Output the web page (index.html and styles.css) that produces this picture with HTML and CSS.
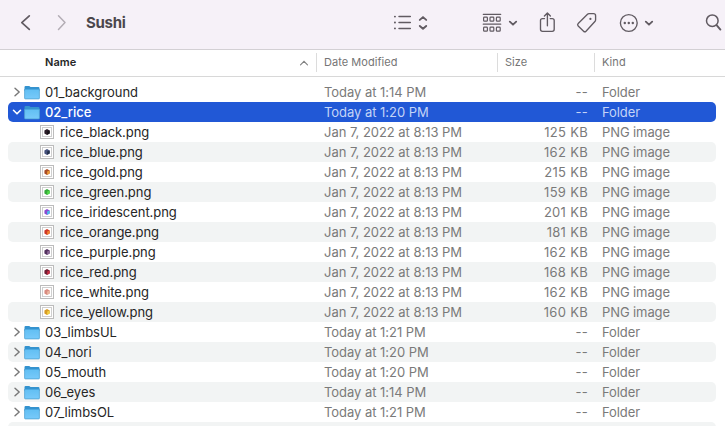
FILE: index.html
```html
<!DOCTYPE html>
<html lang="en">
<head>
<meta charset="utf-8">
<title>Sushi</title>
<link rel="stylesheet" href="styles.css">
</head>
<body>
<svg class="defs" width="0" height="0">
  <defs>
    <linearGradient id="face" x1="0" y1="0" x2="0" y2="1"><stop offset="0" stop-color="#62bff3"/><stop offset="1" stop-color="#78cafa"/></linearGradient>
    <symbol id="folder" viewBox="0 0 16 15">
      <path d="M.5 2.2Q.5 1 1.6 1H5.2L6.6 2.1H14.4Q15.5 2.1 15.5 3.2V6H.5Z" fill="#3493cf"/>
      <path d="M.5 4.6H15.5V13Q15.5 14 14.5 14H1.5Q.5 14 .5 13Z" fill="url(#face)"/>
      <path d="M.6 4V13.3Q.6 13.9 1.4 13.9H14.6Q15.4 13.9 15.4 13.3V4" fill="none" stroke="#4a9dce" stroke-width=".7"/>
    </symbol>
    <symbol id="closed" viewBox="0 0 10 10"><path d="M3 1.2L7.2 5L3 8.8" fill="none" stroke="currentColor" stroke-width="1.4" stroke-linecap="round" stroke-linejoin="round"/></symbol>
    <symbol id="open" viewBox="0 0 10 10"><path d="M1.5 3.3L5 6.8L8.5 3.3" fill="none" stroke="currentColor" stroke-width="1.6" stroke-linecap="round" stroke-linejoin="round"/></symbol>
    <symbol id="thumb" viewBox="0 0 14 14">
      <rect x=".5" y=".5" width="13" height="13" fill="#fff" stroke="#bcbcbc"/>
      <rect x="2.5" y="2.5" width="9" height="9" fill="#fff" stroke="#cfcfcf"/>
      <path d="M7 4.1L9.7 5.4V8.5L7 9.9L4.4 8.5V5.4Z" fill="currentColor"/>
      <path d="M7.1 6.6L9.7 5.4V8.5L7.1 9.8Z" fill="var(--side)"/>
    </symbol>
  </defs>
</svg>
<header class="toolbar">
  <svg viewBox="0 0 725 49" width="725" height="49" fill="none" stroke="#615b62" stroke-width="1.5" stroke-linecap="round" stroke-linejoin="round">
    <path d="M29.3 15.8L21.8 22.6L29.3 29.4" stroke-width="1.7"/>
    <path d="M58.5 15.8L65 22.6L58.5 29.4" stroke="#b3adb5"/>
    <path d="M399 16.6H410.3M399 22.5H410.3M399 28.4H410.3"/>
    <path d="M394.9 16.6H395M394.9 22.5H395M394.9 28.4H395" stroke-width="1.9"/>
    <path d="M419.8 19.9L423 17.1L426.2 19.9M419.8 26L423 28.8L426.2 26" stroke-width="1.9"/>
    <path d="M483.3 14.3H500.7M483.3 24.2H500.7" stroke-width="1.3"/>
    <g stroke-width="1.2"><rect x="483.6" y="17.2" width="3.8" height="4" rx=".8"/><rect x="490" y="17.2" width="3.8" height="4" rx=".8"/><rect x="496.4" y="17.2" width="3.8" height="4" rx=".8"/><rect x="483.6" y="27.2" width="3.8" height="4" rx=".8"/><rect x="490" y="27.2" width="3.8" height="4" rx=".8"/><rect x="496.4" y="27.2" width="3.8" height="4" rx=".8"/></g>
    <path d="M509.8 21.6L513 24.7L516.2 21.6M645.8 21.6L649 24.7L652.2 21.6" stroke-width="1.8"/>
    <path d="M544.5 18.6H542.5Q540.5 18.6 540.5 20.6V29.2Q540.5 31.3 542.5 31.3H552.2Q554.2 31.3 554.2 29.2V20.6Q554.2 18.6 552.2 18.6H550.2M547.4 25.8V13.3M544.4 16L547.4 13L550.4 16" stroke-width="1.35"/>
    <path d="M587.5 14.2Q588.1 13.6 589 13.6H593.5Q595.6 13.6 595.6 15.7V19.8Q595.6 20.8 594.9 21.5L586 31.2Q584.8 32.4 583.6 31.2L578.2 26.1Q577 24.8 578.2 23.6Z" stroke-width="1.35"/>
    <circle cx="590.4" cy="18.9" r="1.1" fill="#615b62" stroke="none"/>
    <circle cx="628.8" cy="23" r="8.4" stroke-width="1.35"/>
    <g fill="#615b62" stroke="none"><circle cx="624.8" cy="23" r="1.2"/><circle cx="628.8" cy="23" r="1.2"/><circle cx="632.8" cy="23" r="1.2"/></g>
    <circle cx="712.3" cy="20.7" r="5.8"/><path d="M716.6 25.2L720.4 29.6" stroke-width="1.9"/>
  </svg>
  <h1>Sushi</h1>
</header>
<div class="columns">
  <div class="c-name">Name<svg width="10" height="10" viewBox="0 0 10 10"><path d="M1.5 6.8L5 3.3L8.5 6.8" fill="none" stroke="#808080" stroke-width="1.1" stroke-linecap="round"/></svg></div>
  <div class="c-date">Date Modified</div><div class="c-size">Size</div><div>Kind</div>
</div>
<main class="list">
  <div class="row"><svg class="arrow"><use href="#closed"/></svg><svg class="folder"><use href="#folder"/></svg><span class="name">01_background</span><span class="date">Today at 1:14 PM</span><span class="size">--</span><span class="kind">Folder</span></div>
  <div class="row selected"><svg class="arrow"><use href="#open"/></svg><svg class="folder"><use href="#folder"/></svg><span class="name">02_rice</span><span class="date">Today at 1:20 PM</span><span class="size">--</span><span class="kind">Folder</span></div>
  <div class="row file"><svg class="thumb black"><use href="#thumb"/></svg><span class="name">rice_black.png</span><span class="date">Jan 7, 2022 at 8:13 PM</span><span class="size">125 KB</span><span class="kind">PNG image</span></div>
  <div class="row file"><svg class="thumb blue"><use href="#thumb"/></svg><span class="name">rice_blue.png</span><span class="date">Jan 7, 2022 at 8:13 PM</span><span class="size">162 KB</span><span class="kind">PNG image</span></div>
  <div class="row file"><svg class="thumb gold"><use href="#thumb"/></svg><span class="name">rice_gold.png</span><span class="date">Jan 7, 2022 at 8:13 PM</span><span class="size">215 KB</span><span class="kind">PNG image</span></div>
  <div class="row file"><svg class="thumb green"><use href="#thumb"/></svg><span class="name">rice_green.png</span><span class="date">Jan 7, 2022 at 8:13 PM</span><span class="size">159 KB</span><span class="kind">PNG image</span></div>
  <div class="row file"><svg class="thumb iridescent"><use href="#thumb"/></svg><span class="name">rice_iridescent.png</span><span class="date">Jan 7, 2022 at 8:13 PM</span><span class="size">201 KB</span><span class="kind">PNG image</span></div>
  <div class="row file"><svg class="thumb orange"><use href="#thumb"/></svg><span class="name">rice_orange.png</span><span class="date">Jan 7, 2022 at 8:13 PM</span><span class="size">181 KB</span><span class="kind">PNG image</span></div>
  <div class="row file"><svg class="thumb purple"><use href="#thumb"/></svg><span class="name">rice_purple.png</span><span class="date">Jan 7, 2022 at 8:13 PM</span><span class="size">162 KB</span><span class="kind">PNG image</span></div>
  <div class="row file"><svg class="thumb red"><use href="#thumb"/></svg><span class="name">rice_red.png</span><span class="date">Jan 7, 2022 at 8:13 PM</span><span class="size">168 KB</span><span class="kind">PNG image</span></div>
  <div class="row file"><svg class="thumb white"><use href="#thumb"/></svg><span class="name">rice_white.png</span><span class="date">Jan 7, 2022 at 8:13 PM</span><span class="size">162 KB</span><span class="kind">PNG image</span></div>
  <div class="row file"><svg class="thumb yellow"><use href="#thumb"/></svg><span class="name">rice_yellow.png</span><span class="date">Jan 7, 2022 at 8:13 PM</span><span class="size">160 KB</span><span class="kind">PNG image</span></div>
  <div class="row"><svg class="arrow"><use href="#closed"/></svg><svg class="folder"><use href="#folder"/></svg><span class="name">03_limbsUL</span><span class="date">Today at 1:21 PM</span><span class="size">--</span><span class="kind">Folder</span></div>
  <div class="row"><svg class="arrow"><use href="#closed"/></svg><svg class="folder"><use href="#folder"/></svg><span class="name">04_nori</span><span class="date">Today at 1:20 PM</span><span class="size">--</span><span class="kind">Folder</span></div>
  <div class="row"><svg class="arrow"><use href="#closed"/></svg><svg class="folder"><use href="#folder"/></svg><span class="name">05_mouth</span><span class="date">Today at 1:20 PM</span><span class="size">--</span><span class="kind">Folder</span></div>
  <div class="row"><svg class="arrow"><use href="#closed"/></svg><svg class="folder"><use href="#folder"/></svg><span class="name">06_eyes</span><span class="date">Today at 1:14 PM</span><span class="size">--</span><span class="kind">Folder</span></div>
  <div class="row"><svg class="arrow"><use href="#closed"/></svg><svg class="folder"><use href="#folder"/></svg><span class="name">07_limbsOL</span><span class="date">Today at 1:21 PM</span><span class="size">--</span><span class="kind">Folder</span></div>
  <div class="row"><svg class="arrow"></svg><svg class="folder"><use href="#folder"/></svg></div>
</main>
</body>
</html>
```
FILE: styles.css
```css
* { box-sizing: border-box; }
body { margin: 0; width: 725px; height: 426px; overflow: hidden; background: #fff; color: #262626; font: 13px/20px Inter, "Liberation Sans", sans-serif; display: flex; flex-direction: column; }
svg { flex: none; display: block; }
.defs { position: absolute; }
.toolbar { display: grid; flex: none; height: 50px; background: #f6f1f8; border-bottom: 1px solid #d3d0d4; }
.toolbar > * { grid-area: 1 / 1; }
h1 { margin: 13px 0 0 86px; font-size: 15px; line-height: 20px; font-weight: 700; color: #4b474c; letter-spacing: -.3px; }
.columns { display: grid; grid-template-columns: 271px 181px 97px 1fr; flex: none; height: 27px; padding: 3px 0 4px 45px; border-bottom: 1px solid #d8d8d8; font-size: 11px; line-height: 19px; color: #757575; letter-spacing: .05px; }
.columns > div + div { border-left: 1px solid #dcdcdc; padding-left: 7px; }
.columns .c-name { display: flex; justify-content: space-between; align-items: center; padding-right: 7px; font-weight: 600; color: #262626; }
.list { flex: none; margin: 5px 9px 0 8px; }
.row { display: flex; align-items: center; height: 20px; padding-left: 4px; border-radius: 5px; }
.row:nth-child(even) { background: #f2f4f4; }
.row.selected { background: #2158d6; color: #fff; }
.row span { line-height: 21px; }
.arrow { width: 10px; height: 10px; margin-right: 2px; color: #777; }
.selected .arrow { color: #fff; }
.folder { width: 16px; height: 15px; margin-right: 5px; }
.name { width: 279px; letter-spacing: -.02px; }
.selected .name { font-weight: 500; }
.date { width: 180px; color: #7a7a7a; letter-spacing: -.04px; }
.size { width: 84px; text-align: right; color: #7a7a7a; letter-spacing: .3px; }
.kind { margin-left: 14px; color: #7a7a7a; letter-spacing: -.1px; }
.selected .date, .selected .size, .selected .kind { color: #c4d4f7; }
.file { padding-left: 32px; }
.file .name { width: 264px; letter-spacing: -.05px; }
.thumb { width: 14px; height: 14px; margin-right: 6px; }
.black { color: #2b1d28; --side: #171318; }
.blue { color: #46517c; --side: #24314c; }
.gold { color: #a94c26; --side: #e99a38; }
.green { color: #37a83a; --side: #50dc47; }
.iridescent { color: #8a4bd0; --side: #48bde9; }
.orange { color: #cf3826; --side: #ef8130; }
.purple { color: #53305e; --side: #8a6694; }
.red { color: #711c32; --side: #c72b42; }
.white { color: #d98b80; --side: #eab5a0; }
.yellow { color: #d79b25; --side: #f1cf41; }
```
